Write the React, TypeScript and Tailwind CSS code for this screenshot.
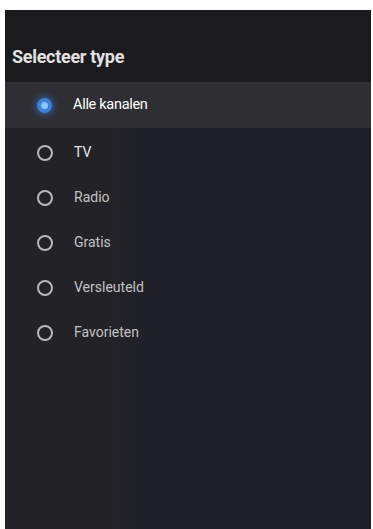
import React from 'react';

const options = ['Alle kanalen', 'TV', 'Radio', 'Gratis', 'Versleuteld', 'Favorieten'];

const Radio: React.FC<{ checked: boolean }> = ({ checked }) =>
  checked ? (
    <span className="flex h-[15px] w-[15px] items-center justify-center rounded-full bg-[#3d7fd9] shadow-[0_0_6px_2px_rgba(60,130,230,0.5)]">
      <span className="h-[7px] w-[7px] rounded-full bg-[#8cc4ff]" />
    </span>
  ) : (
    <span className="h-[16px] w-[16px] rounded-full border-[2.5px] border-[#b8b8b8]" />
  );

export default function App() {
  return (
    <div className="h-[529px] w-[373px] bg-white pl-[5px] pt-[10px] font-['Roboto',sans-serif]">
      <div className="flex h-[519px] w-[366px] flex-col bg-gradient-to-r from-[#232327] from-30% to-[#1f1f29] to-40%">
        <div className="h-[72px] bg-[#1b1b1d] px-[7px] pt-[35px]">
          <h1 className="text-[18px] leading-[24px] font-bold tracking-[-0.3px] text-[#e2e2e2]">Selecteer type</h1>
        </div>
        <ul className="flex flex-col">
          {options.map((label, i) => (
            <li
              key={label}
              className={
                i === 0
                  ? 'mb-[2px] flex h-[46px] items-center gap-[21px] bg-[#2f2f33] pl-[32px]'
                  : 'flex h-[45px] items-center gap-[21px] pl-[32px]'
              }
            >
              <Radio checked={i === 0} />
              <span
                className={
                  i === 0
                    ? 'text-[14.5px] text-white tracking-[-0.3px]'
                    : i === 1
                      ? 'text-[14px] text-[#e6e6e6]'
                      : 'text-[14px] text-[#c2c2c2]'
                }
              >
                {label}
              </span>
            </li>
          ))}
        </ul>
      </div>
    </div>
  );
}
